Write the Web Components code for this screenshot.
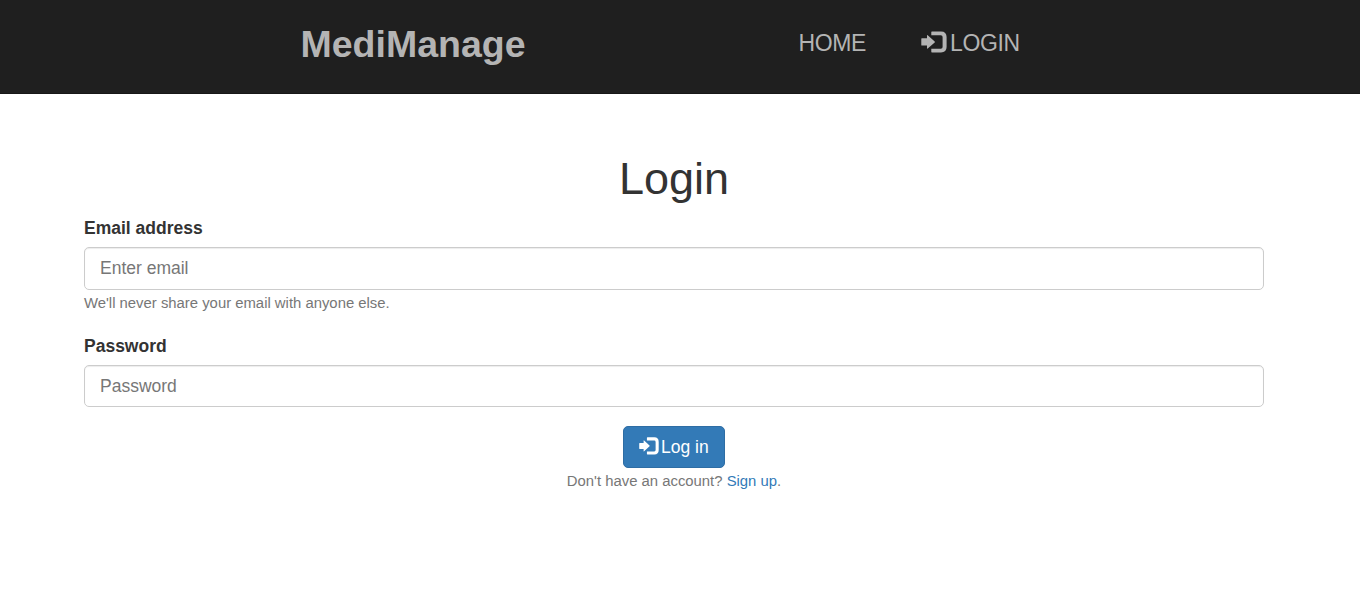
<!DOCTYPE html>
<html lang="en">
<head>
<meta charset="utf-8">
<title>MediManage</title>
<style>
body { margin: 0; background: #fff; color: #333; font: 17.5px/25px "Liberation Sans", Arial, sans-serif; overflow: hidden; }
</style>
</head>
<body>
<medi-navbar></medi-navbar>
<login-form>
  <form-field label="Email address" placeholder="Enter email" type="email">We'll never share your email with anyone else.</form-field>
  <form-field label="Password" placeholder="Password" type="password"></form-field>
</login-form>
<script>
class LoginIcon extends HTMLElement {
  connectedCallback() {
    this.attachShadow({ mode: "open" }).innerHTML = `
      <style>:host { display: block; flex: none; } svg { display: block; width: 100%; height: 100%; }</style>
      <svg viewBox="0 0 26 22" fill="currentColor" preserveAspectRatio="none">
        <path d="M0.3 7.8Q0.3 7.3 0.8 7.3H6V4.5Q6 3.6 6.7 4.2L13.7 10.4Q14.2 10.9 13.7 11.4L6.7 17.4Q6 18 6 17.1V14.6H0.8Q0.3 14.6 0.3 14.1Z"/>
        <path d="M10.3 1Q10.3 0.4 10.9 0.4H20Q25.6 0.4 25.6 6V16Q25.6 21.4 20 21.4H10.9Q10.3 21.4 10.3 20.8V17.7H19.8Q21.6 17.7 21.6 15.9V6Q21.6 4.2 19.8 4.2H10.3Z"/>
      </svg>`;
  }
}
customElements.define("login-icon", LoginIcon);

class MediNavbar extends HTMLElement {
  connectedCallback() {
    this.attachShadow({ mode: "open" }).innerHTML = `
      <style>
        :host { display: block; height: 94px; box-sizing: border-box; background: #1f1f1f; border-bottom: 1px solid #171717; color: #b4b4b4; }
        nav { display: flex; align-items: flex-start; padding-left: 300.5px; }
        .brand { width: 497px; font-weight: bold; font-size: 37.5px; line-height: 44px; margin-top: 22px; }
        .link { display: flex; font-size: 23px; line-height: 26px; margin-top: 30px; white-space: nowrap; letter-spacing: -0.35px; }
        .home { width: 122.5px; padding-left: 1px; }
        login-icon { width: 26px; height: 22px; margin: 1px 3px 0 0; }
      </style>
      <nav><span class="brand">MediManage</span><span class="link home">HOME</span><span class="link"><login-icon></login-icon><span>LOGIN</span></span></nav>`;
  }
}
customElements.define("medi-navbar", MediNavbar);

class FormField extends HTMLElement {
  connectedCallback() {
    this.attachShadow({ mode: "open" }).innerHTML = `
      <style>
        :host { display: block; }
        label { display: block; font-weight: bold; margin-bottom: 6px; }
        input { display: block; box-sizing: border-box; width: 100%; height: var(--field-height, 43px); margin: 0; padding: 7.5px 15px; border: 1px solid #ccc; border-radius: 5px; font: inherit; color: #555; background: #fff; box-shadow: inset 0 1px 1px rgba(0,0,0,.075); }
        :host([type="password"]) input { height: 42px; padding: 8px 15px 7px; }
        input::placeholder { color: #777; opacity: 1; }
        small { display: block; font-size: 14.875px; line-height: 26px; color: #777; }
        :host([type="password"]) small { display: none; }
      </style>
      <label for="f">${this.getAttribute("label")}</label>
      <input id="f" type="${this.getAttribute("type")}" placeholder="${this.getAttribute("placeholder")}">
      <small><slot></slot></small>`;
  }
}
customElements.define("form-field", FormField);

class LoginForm extends HTMLElement {
  connectedCallback() {
    this.attachShadow({ mode: "open" }).innerHTML = `
      <style>
        :host { display: block; width: 1180px; margin-left: 84px; padding-top: 60px; }
        h1 { margin: 0 0 12px; font-size: 45px; line-height: 50px; font-weight: 400; text-align: center; }
        .fields { display: grid; row-gap: 18px; }
        .actions { display: flex; flex-direction: column; align-items: center; margin-top: 19px; }
        button { display: flex; align-items: center; box-sizing: border-box; width: 102px; height: 42px; padding: 0 0 0 15px; border: 1px solid #2e6da4; border-radius: 5px; background: #337ab7; color: #fff; font: inherit; }
        login-icon { width: 20px; height: 18px; margin: -2px 2px 0 0; }
        p { margin: 0; font-size: 14.875px; line-height: 26px; color: #777; }
        a { color: #337ab7; text-decoration: none; }
      </style>
      <h1>Login</h1>
      <div class="fields"><slot></slot></div>
      <div class="actions">
        <button type="button"><login-icon></login-icon><span>Log in</span></button>
        <p>Don't have an account? <a href="#">Sign up</a>.</p>
      </div>`;
  }
}
customElements.define("login-form", LoginForm);
</script>
</body>
</html>
